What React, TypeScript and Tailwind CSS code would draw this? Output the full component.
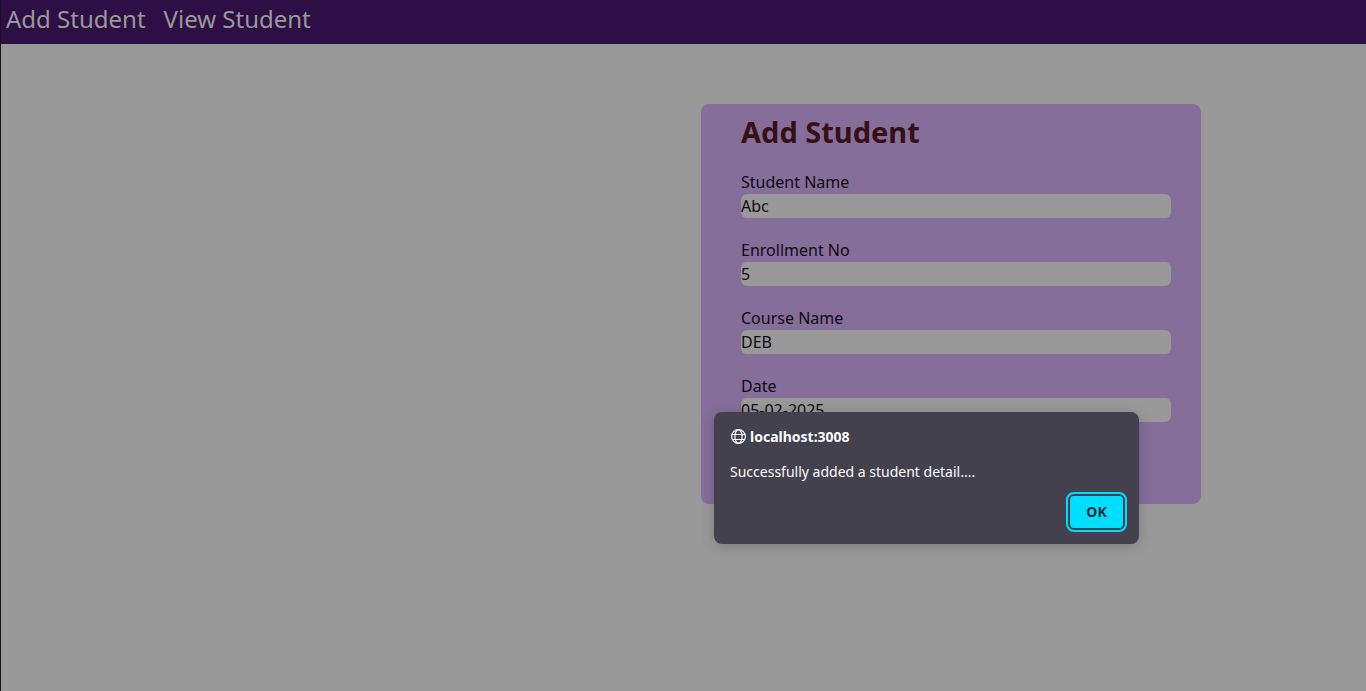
import { useState } from "react";

type Field = { id: string; label: string; value: string };

const initialFields: Field[] = [
  { id: "name", label: "Student Name", value: "Abc" },
  { id: "enrollment", label: "Enrollment No", value: "5" },
  { id: "course", label: "Course Name", value: "DEB" },
  { id: "date", label: "Date", value: "05-02-2025" },
];

function GlobeIcon() {
  return (
    <svg viewBox="0 0 16 16" className="size-4" fill="none" stroke="currentColor" strokeWidth="1.2" aria-hidden="true">
      <circle cx="8.5" cy="7.5" r="6.9" />
      <ellipse cx="8.5" cy="7.5" rx="3.6" ry="6.9" />
      <path d="M2 5.5h13M2 10.5h13" />
    </svg>
  );
}

function Navbar() {
  return (
    <nav className="flex h-11 gap-[18px] bg-[#2d0e45] px-[5px] pt-px text-2xl leading-9 text-[#999999]">
      <a href="#add">Add Student</a>
      <a href="#view">View Student</a>
    </nav>
  );
}

function StudentForm() {
  const [fields, setFields] = useState(initialFields);

  return (
    <form className="mt-15 ml-[700px] w-[500px] rounded-lg bg-[#866e9b] pt-2 pr-[30px] pb-[82px] pl-10">
      <h1 className="mb-[18px] text-[29px] leading-10 font-bold text-[#371017]">Add Student</h1>
      <div className="flex flex-col gap-5">
        {fields.map((field) => (
          <div key={field.id} className="flex flex-col">
            <label htmlFor={field.id} className="leading-6">
              {field.label}
            </label>
            <input
              id={field.id}
              type="text"
              value={field.value}
              onChange={(e) =>
                setFields(fields.map((f) => (f.id === field.id ? { ...f, value: e.target.value } : f)))
              }
              className="h-6 w-full rounded-md bg-[#999999] outline-none"
            />
          </div>
        ))}
      </div>
    </form>
  );
}

function Alert({ onClose }: { onClose: () => void }) {
  return (
    <div
      role="alertdialog"
      aria-labelledby="alert-title"
      aria-describedby="alert-text"
      className="absolute top-[412px] left-[713px] w-[425px] rounded-lg bg-[#42414d] px-4 pt-[15px] pb-[14px] text-[#fbfbfe] shadow-[0_2px_14px_rgba(0,0,0,0.2)]"
    >
      <div id="alert-title" className="flex items-center gap-1 text-sm leading-5 font-bold">
        <GlobeIcon />
        localhost:3008
      </div>
      <p id="alert-text" className="mt-[15px] text-sm leading-5">
        Successfully added a student detail....
      </p>
      <div className="-mr-0.5 mt-3 flex justify-end">
        <button
          type="button"
          onClick={onClose}
          className="h-9 w-[57px] rounded-md border-2 border-[#42414d] bg-[#00ddff] text-sm font-bold text-[#2b2a33] outline-2 outline-[#00ddff]"
        >
          OK
        </button>
      </div>
    </div>
  );
}

export default function App() {
  const [open, setOpen] = useState(true);

  return (
    <div className="relative min-h-screen border-l border-[#1c1016] bg-[#999999] font-['Noto_Sans',sans-serif] text-base text-[#0d0a10]">
      <Navbar />
      <main>
        <StudentForm />
      </main>
      {open && <Alert onClose={() => setOpen(false)} />}
    </div>
  );
}
